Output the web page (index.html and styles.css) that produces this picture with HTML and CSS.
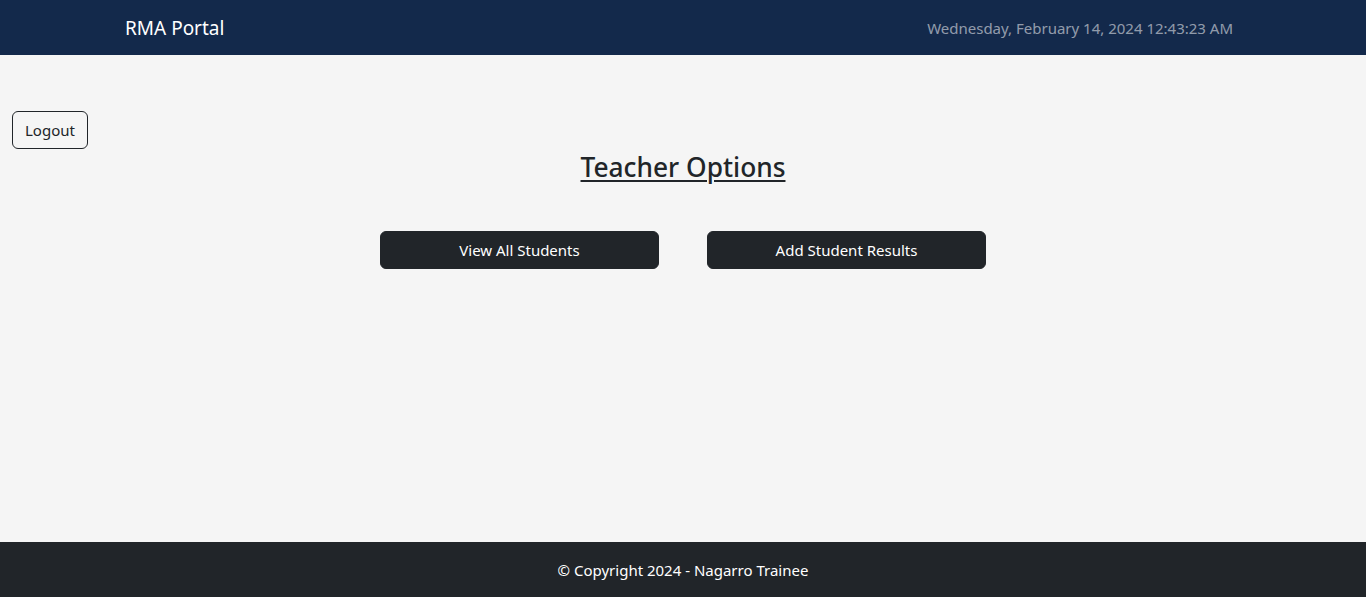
FILE: index.html
```html
<!DOCTYPE html>
<html lang="en">
<head>
<meta charset="utf-8">
<title>RMA Portal</title>
<link rel="stylesheet" href="styles.css">
</head>
<body>
<div class="page">
  <nav class="navbar">
    <div class="container nav-inner">
      <a class="brand" href="#">RMA Portal</a>
      <span class="clock">Wednesday, February 14, 2024 12:43:23 AM</span>
    </div>
  </nav>
  <main class="main">
    <div class="logout-row">
      <button class="btn-outline">Logout</button>
    </div>
    <h3 class="title">Teacher Options</h3>
    <div class="options">
      <button class="btn-dark">View All Students</button>
      <button class="btn-dark">Add Student Results</button>
    </div>
  </main>
  <footer class="footer">© Copyright 2024 - Nagarro Trainee</footer>
</div>
</body>
</html>
```
FILE: styles.css
```css
* { box-sizing: border-box; }
html, body { margin: 0; padding: 0; height: 100%; }
body {
  font-family: "Noto Sans", "Open Sans", sans-serif;
  font-size: 15px;
  line-height: 24px;
  color: #212529;
  background: #f5f5f5;
}
.page { display: flex; flex-direction: column; min-height: 597px; }
.navbar { background: #13294b; height: 55px; display: flex; align-items: center; }
.container { width: 1140px; margin: 0 auto; padding: 0 12px; }
.nav-inner { display: flex; justify-content: space-between; align-items: center; }
.brand { color: #fff; font-size: 19px; text-decoration: none; }
.clock { color: rgba(255,255,255,0.55); padding: 0 8px; }
.main { flex: 1; }
.logout-row { padding: 56px 12px 0; }
.btn-outline {
  font: inherit; color: #212529; background: transparent;
  border: 1px solid #212529; border-radius: 6px;
  padding: 6px 12px; height: 38px; line-height: 24px; cursor: pointer;
}
.title {
  margin: 0; padding-top: 2px; text-align: center; font-size: 26.3px; font-weight: 500;
  line-height: 33.6px; text-decoration: underline; text-underline-offset: 3px;
  text-decoration-thickness: 2px;
}
.options { display: flex; justify-content: center; gap: 48px; margin-top: 46px; }
.btn-dark {
  font: inherit; color: #fff; background: #212529; border: 1px solid #212529;
  border-radius: 6px; width: 279px; height: 38px; line-height: 24px; cursor: pointer;
}
.footer {
  background: #212529; color: #fff; height: 55px;
  display: flex; align-items: center; justify-content: center;
}
```
